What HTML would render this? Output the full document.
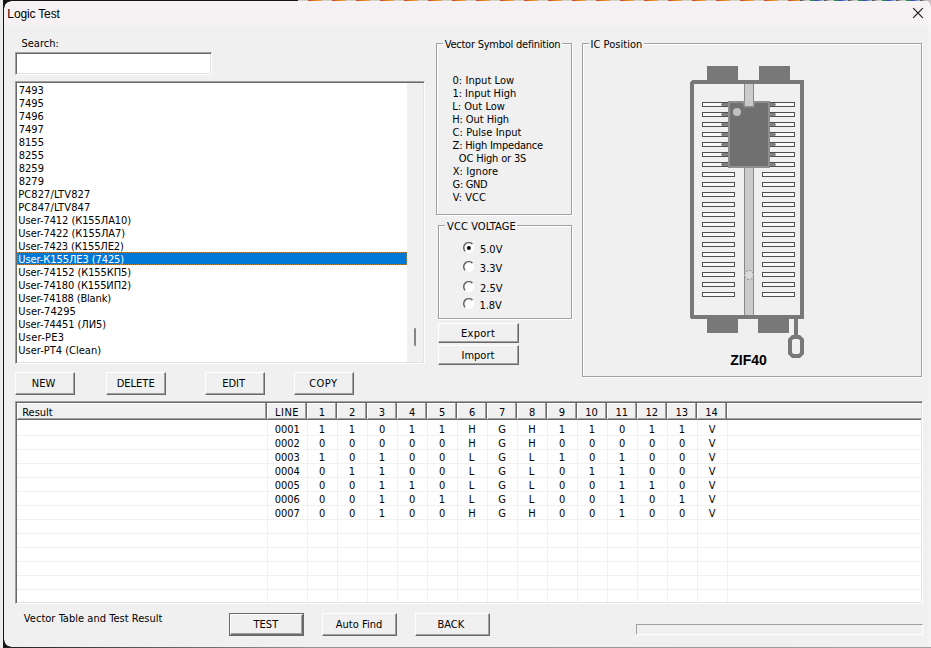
<!DOCTYPE html><html><head><meta charset="utf-8"><title>Logic Test</title><style>
html,body{margin:0;padding:0;}
body{width:931px;height:648px;overflow:hidden;background:#f0f0f0;position:relative;font-family:"DejaVu Sans Condensed","Liberation Sans",sans-serif;font-size:11px;color:#000;}
.a{position:absolute;white-space:nowrap;}
.t{position:absolute;white-space:pre;line-height:13px;height:13px;}
.btn{position:absolute;box-sizing:border-box;background:#f0f0f0;border:1px solid;border-color:#fff #696969 #696969 #fff;box-shadow:inset -1px -1px 0 #a0a0a0;}
.sunk{position:absolute;box-sizing:border-box;border:1px solid;border-color:#a0a0a0 #fff #fff #a0a0a0;box-shadow:inset 1px 1px 0 #696969, inset -1px -1px 0 #e3e3e3;background:#fff;}
.grp{position:absolute;box-sizing:border-box;border:1px solid #a0a0a0;box-shadow:inset 1px 1px 0 #fff, 1px 1px 0 #fff;}
.gl{position:absolute;background:#f0f0f0;height:3px;}
</style></head><body>
<div class="a" style="left:0;top:0;width:931px;height:24px;background:#f6f2f3"></div>
<div class="a" style="left:0;top:24px;width:931px;height:3px;background:linear-gradient(#f6f2f3,#f0f0f0)"></div>
<div class="t" id="title" style="left:7.37px;top:8px;letter-spacing:-0.150px;font-size:12px;font-family:'Liberation Sans',sans-serif;">Logic Test</div>
<svg class="a" style="left:912px;top:7px" width="12" height="12" viewBox="0 0 12 12"><path d="M1.2 1.2L10.8 10.8M10.8 1.2L1.2 10.8" stroke="#111" stroke-width="1.1" fill="none"/></svg>
<div class="t" id="t2" style="left:21.45px;top:37px;">Search:</div>
<div class="sunk" style="left:15px;top:52px;width:197px;height:23px"></div>
<div class="sunk" style="left:15px;top:81px;width:410px;height:283px"></div>
<div class="a" style="left:407px;top:83px;width:16px;height:279px;background:#f0f0f0"></div>
<div class="a" style="left:414px;top:328px;width:2px;height:18px;background:#858585;border-radius:1px"></div>
<div class="t" id="t3" style="left:18.73px;top:84px;">7493</div>
<div class="t" id="t4" style="left:18.73px;top:97px;">7495</div>
<div class="t" id="t5" style="left:18.73px;top:110px;">7496</div>
<div class="t" id="t6" style="left:18.73px;top:123px;">7497</div>
<div class="t" id="t7" style="left:18.78px;top:136px;">8155</div>
<div class="t" id="t8" style="left:18.78px;top:149px;">8255</div>
<div class="t" id="t9" style="left:18.78px;top:162px;">8259</div>
<div class="t" id="t10" style="left:18.78px;top:175px;">8279</div>
<div class="t" id="t11" style="left:18.18px;top:188px;letter-spacing:0.118px;">PC827/LTV827</div>
<div class="t" id="t12" style="left:18.18px;top:201px;letter-spacing:0.118px;">PC847/LTV847</div>
<div class="t" id="t13" style="left:18.36px;top:214px;letter-spacing:-0.072px;">User-7412 (К155ЛА10)</div>
<div class="t" id="t14" style="left:18.36px;top:227px;letter-spacing:-0.064px;">User-7422 (К155ЛА7)</div>
<div class="t" id="t15" style="left:18.36px;top:240px;letter-spacing:-0.102px;">User-7423 (К155ЛЕ2)</div>
<div class="a" style="left:17px;top:252px;width:390px;height:13px;background:#0078d7;outline:1px dotted #c08438;outline-offset:-1px"></div>
<div class="t" id="t16" style="left:18.36px;top:253px;letter-spacing:-0.086px;color:#fff;">User-К155ЛЕ3 (7425)</div>
<div class="t" id="t17" style="left:18.36px;top:266px;letter-spacing:-0.087px;">User-74152 (К155КП5)</div>
<div class="t" id="t18" style="left:18.36px;top:279px;letter-spacing:-0.114px;">User-74180 (К155ИП2)</div>
<div class="t" id="t19" style="left:18.36px;top:292px;letter-spacing:-0.156px;">User-74188 (Blank)</div>
<div class="t" id="t20" style="left:18.36px;top:305px;letter-spacing:0.067px;">User-74295</div>
<div class="t" id="t21" style="left:18.36px;top:318px;letter-spacing:-0.077px;">User-74451 (ЛИ5)</div>
<div class="t" id="t22" style="left:18.36px;top:331px;letter-spacing:0.251px;">User-PE3</div>
<div class="t" id="t23" style="left:18.36px;top:344px;">User-PT4 (Clean)</div>
<div class="btn" style="left:15px;top:372px;width:60px;height:23px"></div>
<div class="t" id="t24" style="left:31.85px;top:377px;">NEW</div>
<div class="btn" style="left:106px;top:372px;width:60px;height:23px"></div>
<div class="t" id="t25" style="left:116.72px;top:377px;">DELETE</div>
<div class="btn" style="left:205px;top:372px;width:60px;height:23px"></div>
<div class="t" id="t26" style="left:222.18px;top:377px;">EDIT</div>
<div class="btn" style="left:294px;top:372px;width:60px;height:23px"></div>
<div class="t" id="t27" style="left:309.16px;top:377px;letter-spacing:0.439px;">COPY</div>
<div class="grp" style="left:436px;top:43px;width:136px;height:172px"></div>
<div class="gl" style="left:442.8px;top:42px;width:119.1px"></div>
<div class="t" id="t28" style="left:444.73px;top:38px;letter-spacing:-0.233px;">Vector Symbol definition</div>
<div class="t" id="t29" style="left:452.51px;top:74px;letter-spacing:0.058px;">0: Input Low</div>
<div class="t" id="t30" style="left:452.39px;top:87px;letter-spacing:-0.033px;">1: Input High</div>
<div class="t" id="t31" style="left:452.18px;top:100px;letter-spacing:0.028px;">L: Out Low</div>
<div class="t" id="t32" style="left:452.18px;top:113px;letter-spacing:-0.078px;">H: Out High</div>
<div class="t" id="t33" style="left:452.60px;top:126px;letter-spacing:0.052px;">C: Pulse Input</div>
<div class="t" id="t34" style="left:452.60px;top:139px;letter-spacing:-0.233px;">Z: High Impedance</div>
<div class="t" id="t35" style="left:458.80px;top:152px;letter-spacing:-0.169px;">OC High or 3S</div>
<div class="t" id="t36" style="left:452.64px;top:165px;letter-spacing:0.090px;">X: Ignore</div>
<div class="t" id="t37" style="left:452.60px;top:178px;letter-spacing:-0.344px;">G: GND</div>
<div class="t" id="t38" style="left:452.86px;top:191px;">V: VCC</div>
<div class="grp" style="left:438px;top:225px;width:134px;height:94px"></div>
<div class="gl" style="left:445.1px;top:224px;width:72px"></div>
<div class="t" id="t39" style="left:447.06px;top:220px;letter-spacing:0.094px;">VCC VOLTAGE</div>
<svg class="a" style="left:463px;top:242px" width="12" height="12" viewBox="0 0 12 12"><circle cx="5.8" cy="5.7" r="5.3" fill="#fff"/><path d="M2.2 9.3A5 5 0 0 1 9.4 2.1" fill="none" stroke="#686868" stroke-width="1.5"/><circle cx="5.9" cy="5.9" r="2" fill="#000"/></svg>
<div class="t" id="t40" style="left:479.91px;top:243px;">5.0V</div>
<svg class="a" style="left:463px;top:261px" width="12" height="12" viewBox="0 0 12 12"><circle cx="5.8" cy="5.7" r="5.3" fill="#fff"/><path d="M2.2 9.3A5 5 0 0 1 9.4 2.1" fill="none" stroke="#686868" stroke-width="1.5"/></svg>
<div class="t" id="t41" style="left:479.85px;top:262px;">3.3V</div>
<svg class="a" style="left:463px;top:281px" width="12" height="12" viewBox="0 0 12 12"><circle cx="5.8" cy="5.7" r="5.3" fill="#fff"/><path d="M2.2 9.3A5 5 0 0 1 9.4 2.1" fill="none" stroke="#686868" stroke-width="1.5"/></svg>
<div class="t" id="t42" style="left:479.98px;top:281.5px;">2.5V</div>
<svg class="a" style="left:463px;top:298px" width="12" height="12" viewBox="0 0 12 12"><circle cx="5.8" cy="5.7" r="5.3" fill="#fff"/><path d="M2.2 9.3A5 5 0 0 1 9.4 2.1" fill="none" stroke="#686868" stroke-width="1.5"/></svg>
<div class="t" id="t43" style="left:479.40px;top:298.5px;">1.8V</div>
<div class="btn" style="left:438px;top:323px;width:81px;height:20px"></div>
<div class="t" id="t44" style="left:461.00px;top:327px;letter-spacing:0.274px;">Export</div>
<div class="btn" style="left:438px;top:345px;width:81px;height:20px"></div>
<div class="t" id="t45" style="left:461.50px;top:349px;">Import</div>
<div class="grp" style="left:582px;top:43px;width:340px;height:334px"></div>
<div class="gl" style="left:589.3px;top:42px;width:54.4px"></div>
<div class="t" id="t46" style="left:590.51px;top:38px;letter-spacing:0.038px;">IC Position</div>
<svg class="a" style="left:680px;top:60px" width="140" height="310" viewBox="680 60 140 310" shape-rendering="crispEdges">
<rect x="707" y="66" width="31" height="14" fill="#787878"/>
<rect x="759" y="66" width="31" height="14" fill="#787878"/>
<rect x="707" y="319" width="31" height="14" fill="#787878"/>
<rect x="758" y="319" width="31" height="14" fill="#787878"/>
<path d="M692 80H804V319H691V318H690V82H691V81H692ZM694 84V315H800V84Z" fill="#787878" fill-rule="evenodd"/>
<rect x="744" y="84" width="10" height="231" fill="#888888"/><rect x="745" y="84" width="8" height="231" fill="#cbcbcb"/>
<rect x="702" y="102" width="33" height="5" fill="#505050"/><rect x="703" y="103" width="31" height="3" fill="#f9f9f9"/>
<rect x="762" y="102" width="33" height="5" fill="#505050"/><rect x="763" y="103" width="31" height="3" fill="#f9f9f9"/>
<rect x="702" y="112" width="33" height="5" fill="#505050"/><rect x="703" y="113" width="31" height="3" fill="#f9f9f9"/>
<rect x="762" y="112" width="33" height="5" fill="#505050"/><rect x="763" y="113" width="31" height="3" fill="#f9f9f9"/>
<rect x="702" y="122" width="33" height="5" fill="#505050"/><rect x="703" y="123" width="31" height="3" fill="#f9f9f9"/>
<rect x="762" y="122" width="33" height="5" fill="#505050"/><rect x="763" y="123" width="31" height="3" fill="#f9f9f9"/>
<rect x="702" y="132" width="33" height="5" fill="#505050"/><rect x="703" y="133" width="31" height="3" fill="#f9f9f9"/>
<rect x="762" y="132" width="33" height="5" fill="#505050"/><rect x="763" y="133" width="31" height="3" fill="#f9f9f9"/>
<rect x="702" y="142" width="33" height="5" fill="#505050"/><rect x="703" y="143" width="31" height="3" fill="#f9f9f9"/>
<rect x="762" y="142" width="33" height="5" fill="#505050"/><rect x="763" y="143" width="31" height="3" fill="#f9f9f9"/>
<rect x="702" y="152" width="33" height="5" fill="#505050"/><rect x="703" y="153" width="31" height="3" fill="#f9f9f9"/>
<rect x="762" y="152" width="33" height="5" fill="#505050"/><rect x="763" y="153" width="31" height="3" fill="#f9f9f9"/>
<rect x="702" y="162" width="33" height="5" fill="#505050"/><rect x="703" y="163" width="31" height="3" fill="#f9f9f9"/>
<rect x="762" y="162" width="33" height="5" fill="#505050"/><rect x="763" y="163" width="31" height="3" fill="#f9f9f9"/>
<rect x="702" y="172" width="33" height="5" fill="#505050"/><rect x="703" y="173" width="31" height="3" fill="#f9f9f9"/>
<rect x="762" y="172" width="33" height="5" fill="#505050"/><rect x="763" y="173" width="31" height="3" fill="#f9f9f9"/>
<rect x="702" y="182" width="33" height="5" fill="#505050"/><rect x="703" y="183" width="31" height="3" fill="#f9f9f9"/>
<rect x="762" y="182" width="33" height="5" fill="#505050"/><rect x="763" y="183" width="31" height="3" fill="#f9f9f9"/>
<rect x="702" y="192" width="33" height="5" fill="#505050"/><rect x="703" y="193" width="31" height="3" fill="#f9f9f9"/>
<rect x="762" y="192" width="33" height="5" fill="#505050"/><rect x="763" y="193" width="31" height="3" fill="#f9f9f9"/>
<rect x="702" y="202" width="33" height="5" fill="#505050"/><rect x="703" y="203" width="31" height="3" fill="#f9f9f9"/>
<rect x="762" y="202" width="33" height="5" fill="#505050"/><rect x="763" y="203" width="31" height="3" fill="#f9f9f9"/>
<rect x="702" y="212" width="33" height="5" fill="#505050"/><rect x="703" y="213" width="31" height="3" fill="#f9f9f9"/>
<rect x="762" y="212" width="33" height="5" fill="#505050"/><rect x="763" y="213" width="31" height="3" fill="#f9f9f9"/>
<rect x="702" y="222" width="33" height="5" fill="#505050"/><rect x="703" y="223" width="31" height="3" fill="#f9f9f9"/>
<rect x="762" y="222" width="33" height="5" fill="#505050"/><rect x="763" y="223" width="31" height="3" fill="#f9f9f9"/>
<rect x="702" y="232" width="33" height="5" fill="#505050"/><rect x="703" y="233" width="31" height="3" fill="#f9f9f9"/>
<rect x="762" y="232" width="33" height="5" fill="#505050"/><rect x="763" y="233" width="31" height="3" fill="#f9f9f9"/>
<rect x="702" y="242" width="33" height="5" fill="#505050"/><rect x="703" y="243" width="31" height="3" fill="#f9f9f9"/>
<rect x="762" y="242" width="33" height="5" fill="#505050"/><rect x="763" y="243" width="31" height="3" fill="#f9f9f9"/>
<rect x="702" y="252" width="33" height="5" fill="#505050"/><rect x="703" y="253" width="31" height="3" fill="#f9f9f9"/>
<rect x="762" y="252" width="33" height="5" fill="#505050"/><rect x="763" y="253" width="31" height="3" fill="#f9f9f9"/>
<rect x="702" y="262" width="33" height="5" fill="#505050"/><rect x="703" y="263" width="31" height="3" fill="#f9f9f9"/>
<rect x="762" y="262" width="33" height="5" fill="#505050"/><rect x="763" y="263" width="31" height="3" fill="#f9f9f9"/>
<rect x="702" y="272" width="33" height="5" fill="#505050"/><rect x="703" y="273" width="31" height="3" fill="#f9f9f9"/>
<rect x="762" y="272" width="33" height="5" fill="#505050"/><rect x="763" y="273" width="31" height="3" fill="#f9f9f9"/>
<rect x="702" y="282" width="33" height="5" fill="#505050"/><rect x="703" y="283" width="31" height="3" fill="#f9f9f9"/>
<rect x="762" y="282" width="33" height="5" fill="#505050"/><rect x="763" y="283" width="31" height="3" fill="#f9f9f9"/>
<rect x="702" y="292" width="33" height="5" fill="#505050"/><rect x="703" y="293" width="31" height="3" fill="#f9f9f9"/>
<rect x="762" y="292" width="33" height="5" fill="#505050"/><rect x="763" y="293" width="31" height="3" fill="#f9f9f9"/>
<path d="M722 103 H728 V106 H722 L721 104.5 Z" fill="#808080" shape-rendering="auto"/>
<path d="M770 103 H775 L776 104.5 L775 106 H770 Z" fill="#808080" shape-rendering="auto"/>
<path d="M722 113 H728 V116 H722 L721 114.5 Z" fill="#808080" shape-rendering="auto"/>
<path d="M770 113 H775 L776 114.5 L775 116 H770 Z" fill="#808080" shape-rendering="auto"/>
<path d="M722 123 H728 V126 H722 L721 124.5 Z" fill="#808080" shape-rendering="auto"/>
<path d="M770 123 H775 L776 124.5 L775 126 H770 Z" fill="#808080" shape-rendering="auto"/>
<path d="M722 133 H728 V136 H722 L721 134.5 Z" fill="#808080" shape-rendering="auto"/>
<path d="M770 133 H775 L776 134.5 L775 136 H770 Z" fill="#808080" shape-rendering="auto"/>
<path d="M722 143 H728 V146 H722 L721 144.5 Z" fill="#808080" shape-rendering="auto"/>
<path d="M770 143 H775 L776 144.5 L775 146 H770 Z" fill="#808080" shape-rendering="auto"/>
<path d="M722 153 H728 V156 H722 L721 154.5 Z" fill="#808080" shape-rendering="auto"/>
<path d="M770 153 H775 L776 154.5 L775 156 H770 Z" fill="#808080" shape-rendering="auto"/>
<path d="M722 163 H728 V166 H722 L721 164.5 Z" fill="#808080" shape-rendering="auto"/>
<path d="M770 163 H775 L776 164.5 L775 166 H770 Z" fill="#808080" shape-rendering="auto"/>
<rect x="728" y="101" width="42" height="67" fill="#8e8e8e"/><rect x="730" y="103" width="38" height="63" fill="#707070"/>
<path d="M742 101 L744 107.5 H754 L756 101 Z" fill="#8e8e8e" shape-rendering="auto"/>
<path d="M744 101 H754 V106 H744 Z" fill="#909090"/><rect x="745" y="101" width="8" height="5" fill="#c8c8c8"/>
<circle cx="737" cy="112" r="4" fill="#c0c0c0" shape-rendering="auto"/>
<circle cx="749" cy="275" r="4.5" fill="#dadada" stroke="#8a8a8a" stroke-width="1" stroke-dasharray="2 1.5" shape-rendering="auto"/>
<rect x="794" y="319" width="4" height="17" fill="#787878"/>
<path d="M792 335H800L804 339V354L800 358H792L788 354V339Z M793.5 339L792 340.5V352.5L793.5 354H798.5L800 352.5V340.5L798.5 339Z" fill="#787878" fill-rule="evenodd" shape-rendering="auto"/>
<text x="748.5" y="365" text-anchor="middle" font-family="'Liberation Sans',sans-serif" font-weight="bold" font-size="14" fill="#000">ZIF40</text>
</svg>
<div class="sunk" style="left:15px;top:401px;width:908px;height:203px"></div>
<div class="a" style="left:17px;top:403px;width:904px;height:17px;background:#f0f0f0;box-sizing:border-box;box-shadow:inset 0 -1px 0 #696969, inset 0 -2px 0 #a0a0a0, inset 0 1px 0 #fff"></div>
<div class="a" style="left:17px;top:403px;width:250px;height:16px;box-sizing:border-box;border-left:1px solid #fff;border-right:1px solid #696969;box-shadow:inset -1px 0 0 #a0a0a0"></div>
<div class="a" style="left:267px;top:403px;width:40px;height:16px;box-sizing:border-box;border-left:1px solid #fff;border-right:1px solid #696969;box-shadow:inset -1px 0 0 #a0a0a0"></div>
<div class="a" style="left:307px;top:403px;width:30px;height:16px;box-sizing:border-box;border-left:1px solid #fff;border-right:1px solid #696969;box-shadow:inset -1px 0 0 #a0a0a0"></div>
<div class="a" style="left:337px;top:403px;width:30px;height:16px;box-sizing:border-box;border-left:1px solid #fff;border-right:1px solid #696969;box-shadow:inset -1px 0 0 #a0a0a0"></div>
<div class="a" style="left:367px;top:403px;width:30px;height:16px;box-sizing:border-box;border-left:1px solid #fff;border-right:1px solid #696969;box-shadow:inset -1px 0 0 #a0a0a0"></div>
<div class="a" style="left:397px;top:403px;width:30px;height:16px;box-sizing:border-box;border-left:1px solid #fff;border-right:1px solid #696969;box-shadow:inset -1px 0 0 #a0a0a0"></div>
<div class="a" style="left:427px;top:403px;width:30px;height:16px;box-sizing:border-box;border-left:1px solid #fff;border-right:1px solid #696969;box-shadow:inset -1px 0 0 #a0a0a0"></div>
<div class="a" style="left:457px;top:403px;width:30px;height:16px;box-sizing:border-box;border-left:1px solid #fff;border-right:1px solid #696969;box-shadow:inset -1px 0 0 #a0a0a0"></div>
<div class="a" style="left:487px;top:403px;width:30px;height:16px;box-sizing:border-box;border-left:1px solid #fff;border-right:1px solid #696969;box-shadow:inset -1px 0 0 #a0a0a0"></div>
<div class="a" style="left:517px;top:403px;width:30px;height:16px;box-sizing:border-box;border-left:1px solid #fff;border-right:1px solid #696969;box-shadow:inset -1px 0 0 #a0a0a0"></div>
<div class="a" style="left:547px;top:403px;width:30px;height:16px;box-sizing:border-box;border-left:1px solid #fff;border-right:1px solid #696969;box-shadow:inset -1px 0 0 #a0a0a0"></div>
<div class="a" style="left:577px;top:403px;width:30px;height:16px;box-sizing:border-box;border-left:1px solid #fff;border-right:1px solid #696969;box-shadow:inset -1px 0 0 #a0a0a0"></div>
<div class="a" style="left:607px;top:403px;width:30px;height:16px;box-sizing:border-box;border-left:1px solid #fff;border-right:1px solid #696969;box-shadow:inset -1px 0 0 #a0a0a0"></div>
<div class="a" style="left:637px;top:403px;width:30px;height:16px;box-sizing:border-box;border-left:1px solid #fff;border-right:1px solid #696969;box-shadow:inset -1px 0 0 #a0a0a0"></div>
<div class="a" style="left:667px;top:403px;width:30px;height:16px;box-sizing:border-box;border-left:1px solid #fff;border-right:1px solid #696969;box-shadow:inset -1px 0 0 #a0a0a0"></div>
<div class="a" style="left:697px;top:403px;width:30px;height:16px;box-sizing:border-box;border-left:1px solid #fff;border-right:1px solid #696969;box-shadow:inset -1px 0 0 #a0a0a0"></div>
<div class="a" style="left:727px;top:403px;width:1px;height:15px;background:#fff"></div>
<div class="a" style="left:17px;top:435px;width:904px;height:1px;background:#f0f0f0"></div>
<div class="a" style="left:17px;top:449px;width:904px;height:1px;background:#f0f0f0"></div>
<div class="a" style="left:17px;top:463px;width:904px;height:1px;background:#f0f0f0"></div>
<div class="a" style="left:17px;top:477px;width:904px;height:1px;background:#f0f0f0"></div>
<div class="a" style="left:17px;top:491px;width:904px;height:1px;background:#f0f0f0"></div>
<div class="a" style="left:17px;top:505px;width:904px;height:1px;background:#f0f0f0"></div>
<div class="a" style="left:17px;top:519px;width:904px;height:1px;background:#f0f0f0"></div>
<div class="a" style="left:17px;top:533px;width:904px;height:1px;background:#f0f0f0"></div>
<div class="a" style="left:17px;top:547px;width:904px;height:1px;background:#f0f0f0"></div>
<div class="a" style="left:17px;top:561px;width:904px;height:1px;background:#f0f0f0"></div>
<div class="a" style="left:17px;top:575px;width:904px;height:1px;background:#f0f0f0"></div>
<div class="a" style="left:17px;top:589px;width:904px;height:1px;background:#f0f0f0"></div>
<div class="a" style="left:267px;top:420px;width:1px;height:182px;background:#f0f0f0"></div>
<div class="a" style="left:307px;top:420px;width:1px;height:182px;background:#f0f0f0"></div>
<div class="a" style="left:337px;top:420px;width:1px;height:182px;background:#f0f0f0"></div>
<div class="a" style="left:367px;top:420px;width:1px;height:182px;background:#f0f0f0"></div>
<div class="a" style="left:397px;top:420px;width:1px;height:182px;background:#f0f0f0"></div>
<div class="a" style="left:427px;top:420px;width:1px;height:182px;background:#f0f0f0"></div>
<div class="a" style="left:457px;top:420px;width:1px;height:182px;background:#f0f0f0"></div>
<div class="a" style="left:487px;top:420px;width:1px;height:182px;background:#f0f0f0"></div>
<div class="a" style="left:517px;top:420px;width:1px;height:182px;background:#f0f0f0"></div>
<div class="a" style="left:547px;top:420px;width:1px;height:182px;background:#f0f0f0"></div>
<div class="a" style="left:577px;top:420px;width:1px;height:182px;background:#f0f0f0"></div>
<div class="a" style="left:607px;top:420px;width:1px;height:182px;background:#f0f0f0"></div>
<div class="a" style="left:637px;top:420px;width:1px;height:182px;background:#f0f0f0"></div>
<div class="a" style="left:667px;top:420px;width:1px;height:182px;background:#f0f0f0"></div>
<div class="a" style="left:697px;top:420px;width:1px;height:182px;background:#f0f0f0"></div>
<div class="a" style="left:727px;top:420px;width:1px;height:182px;background:#f0f0f0"></div>
<div class="t" id="t51" style="left:22.20px;top:406px;">Result</div>
<div class="t" id="t52" style="left:275.00px;top:406px;letter-spacing:0.513px;">LINE</div>
<div class="t" id="h1" style="left:301.80px;top:406px;width:40px;text-align:center;">1</div>
<div class="t" id="h2" style="left:332.14px;top:406px;width:40px;text-align:center;">2</div>
<div class="t" id="h3" style="left:361.99px;top:406px;width:40px;text-align:center;">3</div>
<div class="t" id="h4" style="left:392.06px;top:406px;width:40px;text-align:center;">4</div>
<div class="t" id="h5" style="left:422.06px;top:406px;width:40px;text-align:center;">5</div>
<div class="t" id="h6" style="left:452.06px;top:406px;width:40px;text-align:center;">6</div>
<div class="t" id="h7" style="left:482.05px;top:406px;width:40px;text-align:center;">7</div>
<div class="t" id="h8" style="left:512.04px;top:406px;width:40px;text-align:center;">8</div>
<div class="t" id="h9" style="left:542.03px;top:406px;width:40px;text-align:center;">9</div>
<div class="t" id="h10" style="left:571.57px;top:406px;width:40px;text-align:center;">10</div>
<div class="t" id="h11" style="left:601.70px;top:406px;width:40px;text-align:center;">11</div>
<div class="t" id="h12" style="left:631.74px;top:406px;width:40px;text-align:center;">12</div>
<div class="t" id="h13" style="left:661.68px;top:406px;width:40px;text-align:center;">13</div>
<div class="t" id="h14" style="left:691.55px;top:406px;width:40px;text-align:center;">14</div>
<div class="t" id="t67" style="left:274.71px;top:423px;">0001</div>
<div class="t" id="c0_1" style="left:301.80px;top:423px;width:40px;text-align:center;">1</div>
<div class="t" id="c0_2" style="left:331.80px;top:423px;width:40px;text-align:center;">1</div>
<div class="t" id="c0_3" style="left:362.05px;top:423px;width:40px;text-align:center;">0</div>
<div class="t" id="c0_4" style="left:391.80px;top:423px;width:40px;text-align:center;">1</div>
<div class="t" id="c0_5" style="left:421.80px;top:423px;width:40px;text-align:center;">1</div>
<div class="t" id="c0_6" style="left:451.98px;top:423px;width:40px;text-align:center;">H</div>
<div class="t" id="c0_7" style="left:482.01px;top:423px;width:40px;text-align:center;">G</div>
<div class="t" id="c0_8" style="left:511.98px;top:423px;width:40px;text-align:center;">H</div>
<div class="t" id="c0_9" style="left:541.80px;top:423px;width:40px;text-align:center;">1</div>
<div class="t" id="c0_10" style="left:571.80px;top:423px;width:40px;text-align:center;">1</div>
<div class="t" id="c0_11" style="left:602.05px;top:423px;width:40px;text-align:center;">0</div>
<div class="t" id="c0_12" style="left:631.80px;top:423px;width:40px;text-align:center;">1</div>
<div class="t" id="c0_13" style="left:661.80px;top:423px;width:40px;text-align:center;">1</div>
<div class="t" id="c0_14" style="left:692.05px;top:423px;width:40px;text-align:center;">V</div>
<div class="t" id="t82" style="left:274.71px;top:437px;">0002</div>
<div class="t" id="c1_1" style="left:302.05px;top:437px;width:40px;text-align:center;">0</div>
<div class="t" id="c1_2" style="left:332.05px;top:437px;width:40px;text-align:center;">0</div>
<div class="t" id="c1_3" style="left:362.05px;top:437px;width:40px;text-align:center;">0</div>
<div class="t" id="c1_4" style="left:392.05px;top:437px;width:40px;text-align:center;">0</div>
<div class="t" id="c1_5" style="left:422.05px;top:437px;width:40px;text-align:center;">0</div>
<div class="t" id="c1_6" style="left:451.98px;top:437px;width:40px;text-align:center;">H</div>
<div class="t" id="c1_7" style="left:482.01px;top:437px;width:40px;text-align:center;">G</div>
<div class="t" id="c1_8" style="left:511.98px;top:437px;width:40px;text-align:center;">H</div>
<div class="t" id="c1_9" style="left:542.05px;top:437px;width:40px;text-align:center;">0</div>
<div class="t" id="c1_10" style="left:572.05px;top:437px;width:40px;text-align:center;">0</div>
<div class="t" id="c1_11" style="left:602.05px;top:437px;width:40px;text-align:center;">0</div>
<div class="t" id="c1_12" style="left:632.05px;top:437px;width:40px;text-align:center;">0</div>
<div class="t" id="c1_13" style="left:662.05px;top:437px;width:40px;text-align:center;">0</div>
<div class="t" id="c1_14" style="left:692.05px;top:437px;width:40px;text-align:center;">V</div>
<div class="t" id="t97" style="left:274.71px;top:451px;">0003</div>
<div class="t" id="c2_1" style="left:301.80px;top:451px;width:40px;text-align:center;">1</div>
<div class="t" id="c2_2" style="left:332.05px;top:451px;width:40px;text-align:center;">0</div>
<div class="t" id="c2_3" style="left:361.80px;top:451px;width:40px;text-align:center;">1</div>
<div class="t" id="c2_4" style="left:392.05px;top:451px;width:40px;text-align:center;">0</div>
<div class="t" id="c2_5" style="left:422.05px;top:451px;width:40px;text-align:center;">0</div>
<div class="t" id="c2_6" style="left:451.48px;top:451px;width:40px;text-align:center;">L</div>
<div class="t" id="c2_7" style="left:482.01px;top:451px;width:40px;text-align:center;">G</div>
<div class="t" id="c2_8" style="left:511.48px;top:451px;width:40px;text-align:center;">L</div>
<div class="t" id="c2_9" style="left:541.80px;top:451px;width:40px;text-align:center;">1</div>
<div class="t" id="c2_10" style="left:572.05px;top:451px;width:40px;text-align:center;">0</div>
<div class="t" id="c2_11" style="left:601.80px;top:451px;width:40px;text-align:center;">1</div>
<div class="t" id="c2_12" style="left:632.05px;top:451px;width:40px;text-align:center;">0</div>
<div class="t" id="c2_13" style="left:662.05px;top:451px;width:40px;text-align:center;">0</div>
<div class="t" id="c2_14" style="left:692.05px;top:451px;width:40px;text-align:center;">V</div>
<div class="t" id="t112" style="left:274.71px;top:465px;">0004</div>
<div class="t" id="c3_1" style="left:302.05px;top:465px;width:40px;text-align:center;">0</div>
<div class="t" id="c3_2" style="left:331.80px;top:465px;width:40px;text-align:center;">1</div>
<div class="t" id="c3_3" style="left:361.80px;top:465px;width:40px;text-align:center;">1</div>
<div class="t" id="c3_4" style="left:392.05px;top:465px;width:40px;text-align:center;">0</div>
<div class="t" id="c3_5" style="left:422.05px;top:465px;width:40px;text-align:center;">0</div>
<div class="t" id="c3_6" style="left:451.48px;top:465px;width:40px;text-align:center;">L</div>
<div class="t" id="c3_7" style="left:482.01px;top:465px;width:40px;text-align:center;">G</div>
<div class="t" id="c3_8" style="left:511.48px;top:465px;width:40px;text-align:center;">L</div>
<div class="t" id="c3_9" style="left:542.05px;top:465px;width:40px;text-align:center;">0</div>
<div class="t" id="c3_10" style="left:571.80px;top:465px;width:40px;text-align:center;">1</div>
<div class="t" id="c3_11" style="left:601.80px;top:465px;width:40px;text-align:center;">1</div>
<div class="t" id="c3_12" style="left:632.05px;top:465px;width:40px;text-align:center;">0</div>
<div class="t" id="c3_13" style="left:662.05px;top:465px;width:40px;text-align:center;">0</div>
<div class="t" id="c3_14" style="left:692.05px;top:465px;width:40px;text-align:center;">V</div>
<div class="t" id="t127" style="left:274.71px;top:479px;">0005</div>
<div class="t" id="c4_1" style="left:302.05px;top:479px;width:40px;text-align:center;">0</div>
<div class="t" id="c4_2" style="left:332.05px;top:479px;width:40px;text-align:center;">0</div>
<div class="t" id="c4_3" style="left:361.80px;top:479px;width:40px;text-align:center;">1</div>
<div class="t" id="c4_4" style="left:391.80px;top:479px;width:40px;text-align:center;">1</div>
<div class="t" id="c4_5" style="left:422.05px;top:479px;width:40px;text-align:center;">0</div>
<div class="t" id="c4_6" style="left:451.48px;top:479px;width:40px;text-align:center;">L</div>
<div class="t" id="c4_7" style="left:482.01px;top:479px;width:40px;text-align:center;">G</div>
<div class="t" id="c4_8" style="left:511.48px;top:479px;width:40px;text-align:center;">L</div>
<div class="t" id="c4_9" style="left:542.05px;top:479px;width:40px;text-align:center;">0</div>
<div class="t" id="c4_10" style="left:572.05px;top:479px;width:40px;text-align:center;">0</div>
<div class="t" id="c4_11" style="left:601.80px;top:479px;width:40px;text-align:center;">1</div>
<div class="t" id="c4_12" style="left:631.80px;top:479px;width:40px;text-align:center;">1</div>
<div class="t" id="c4_13" style="left:662.05px;top:479px;width:40px;text-align:center;">0</div>
<div class="t" id="c4_14" style="left:692.05px;top:479px;width:40px;text-align:center;">V</div>
<div class="t" id="t142" style="left:274.71px;top:493px;">0006</div>
<div class="t" id="c5_1" style="left:302.05px;top:493px;width:40px;text-align:center;">0</div>
<div class="t" id="c5_2" style="left:332.05px;top:493px;width:40px;text-align:center;">0</div>
<div class="t" id="c5_3" style="left:361.80px;top:493px;width:40px;text-align:center;">1</div>
<div class="t" id="c5_4" style="left:392.05px;top:493px;width:40px;text-align:center;">0</div>
<div class="t" id="c5_5" style="left:421.80px;top:493px;width:40px;text-align:center;">1</div>
<div class="t" id="c5_6" style="left:451.48px;top:493px;width:40px;text-align:center;">L</div>
<div class="t" id="c5_7" style="left:482.01px;top:493px;width:40px;text-align:center;">G</div>
<div class="t" id="c5_8" style="left:511.48px;top:493px;width:40px;text-align:center;">L</div>
<div class="t" id="c5_9" style="left:542.05px;top:493px;width:40px;text-align:center;">0</div>
<div class="t" id="c5_10" style="left:572.05px;top:493px;width:40px;text-align:center;">0</div>
<div class="t" id="c5_11" style="left:601.80px;top:493px;width:40px;text-align:center;">1</div>
<div class="t" id="c5_12" style="left:632.05px;top:493px;width:40px;text-align:center;">0</div>
<div class="t" id="c5_13" style="left:661.80px;top:493px;width:40px;text-align:center;">1</div>
<div class="t" id="c5_14" style="left:692.05px;top:493px;width:40px;text-align:center;">V</div>
<div class="t" id="t157" style="left:274.71px;top:507px;">0007</div>
<div class="t" id="c6_1" style="left:302.05px;top:507px;width:40px;text-align:center;">0</div>
<div class="t" id="c6_2" style="left:332.05px;top:507px;width:40px;text-align:center;">0</div>
<div class="t" id="c6_3" style="left:361.80px;top:507px;width:40px;text-align:center;">1</div>
<div class="t" id="c6_4" style="left:392.05px;top:507px;width:40px;text-align:center;">0</div>
<div class="t" id="c6_5" style="left:422.05px;top:507px;width:40px;text-align:center;">0</div>
<div class="t" id="c6_6" style="left:451.98px;top:507px;width:40px;text-align:center;">H</div>
<div class="t" id="c6_7" style="left:482.01px;top:507px;width:40px;text-align:center;">G</div>
<div class="t" id="c6_8" style="left:511.98px;top:507px;width:40px;text-align:center;">H</div>
<div class="t" id="c6_9" style="left:542.05px;top:507px;width:40px;text-align:center;">0</div>
<div class="t" id="c6_10" style="left:572.05px;top:507px;width:40px;text-align:center;">0</div>
<div class="t" id="c6_11" style="left:601.80px;top:507px;width:40px;text-align:center;">1</div>
<div class="t" id="c6_12" style="left:632.05px;top:507px;width:40px;text-align:center;">0</div>
<div class="t" id="c6_13" style="left:662.05px;top:507px;width:40px;text-align:center;">0</div>
<div class="t" id="c6_14" style="left:692.05px;top:507px;width:40px;text-align:center;">V</div>
<div class="t" id="t47" style="left:23.86px;top:612px;letter-spacing:0.026px;">Vector Table and Test Result</div>
<div class="a" style="left:229px;top:613px;width:75px;height:23px;box-sizing:border-box;border:1px solid #696969"></div>
<div class="btn" style="left:230px;top:614px;width:73px;height:21px"></div>
<div class="t" id="t48" style="left:253.58px;top:618px;">TEST</div>
<div class="btn" style="left:322px;top:613px;width:75px;height:23px"></div>
<div class="t" id="t49" style="left:335.64px;top:618px;letter-spacing:0.056px;">Auto Find</div>
<div class="btn" style="left:415px;top:613px;width:75px;height:23px"></div>
<div class="t" id="t50" style="left:437.38px;top:618px;">BACK</div>
<div class="a" style="left:636px;top:624px;width:287px;height:11px;box-sizing:border-box;border:1px solid;border-color:#a0a0a0 #fff #fff #a0a0a0"></div>
<div class="a" style="left:0;top:0;width:3px;height:648px;background:#ececec"></div>
<div class="a" style="left:3px;top:0;width:1px;height:648px;background:#141414"></div>
<div class="a" style="left:3px;top:0;width:8px;height:8px;background:radial-gradient(circle at 100% 100%,rgba(20,20,20,0) 6.2px,#141414 7px)"></div>
<div class="a" style="left:3px;top:640px;width:8px;height:8px;background:radial-gradient(circle at 100% 0,rgba(20,20,20,0) 6.2px,#141414 7px)"></div>
<div class="a" style="left:4px;top:0;width:294px;height:1px;background:#141414"></div>
<div class="a" style="left:298px;top:0;width:502px;height:1px;background:repeating-linear-gradient(90deg,#d8d0c8 0,#d8d0c8 10px,#c04030 10px,#e08020 17px,#d8b040 24px)"></div>
<div class="a" style="left:800px;top:0;width:131px;height:1px;background:repeating-linear-gradient(90deg,#404040 0,#c8d0c8 6px,#c8d0c8 10px,#309040 10px,#3050c0 17px,#b0c0d8 24px)"></div>
<div class="a" style="left:926px;top:1px;width:5px;height:646px;background:linear-gradient(90deg,rgba(255,255,255,0),rgba(255,255,255,.35))"></div>
<div class="a" style="left:4px;top:647px;width:927px;height:1px;background:linear-gradient(90deg,#202020 0,#606060 160px,#909090 300px,#a0a0a0 100%)"></div>
<div class="a" style="left:925px;top:0;width:6px;height:6px;background:radial-gradient(circle at 0 100%,rgba(200,190,190,0) 5px,#c8bebe 6px)"></div>
</body></html>
